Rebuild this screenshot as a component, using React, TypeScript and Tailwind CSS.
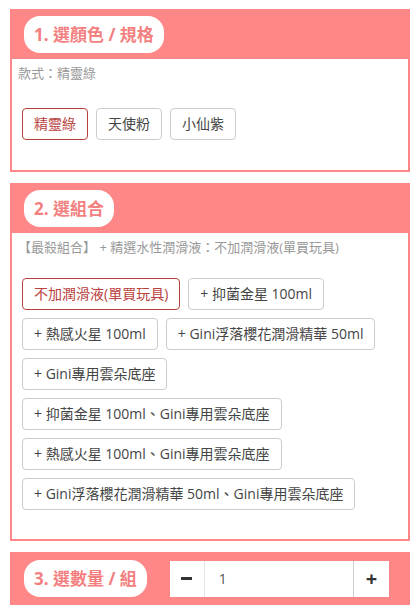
import React, { useState } from 'react';

const FONT = { fontFamily: '"Open Sans", "Noto Sans CJK TC", sans-serif' };

function Pill({ children }: { children: React.ReactNode }) {
  return (
    <div className="w-fit h-[37px] px-[10px] flex items-center rounded-[16px] bg-white text-[17px] font-bold text-[#f47f7f] leading-none whitespace-nowrap">
      {children}
    </div>
  );
}

function Option({ label, active, onClick }: { label: string; active: boolean; onClick: () => void }) {
  return (
    <button
      onClick={onClick}
      className={`h-[32px] px-[11px] rounded-[4px] border text-[14px] leading-none bg-white whitespace-nowrap ${
        active ? 'border-[#b9413d] text-[#b9413d]' : 'border-[#cccccc] text-[#444]'
      }`}
    >
      {label}
    </button>
  );
}

const colors = ['精靈綠', '天使粉', '小仙紫'];
const combos = [
  '不加潤滑液(單買玩具)',
  '+ 抑菌金星 100ml',
  '+ 熱感火星 100ml',
  '+ Gini浮落櫻花潤滑精華 50ml',
  '+ Gini專用雲朵底座',
  '+ 抑菌金星 100ml、Gini專用雲朵底座',
  '+ 熱感火星 100ml、Gini專用雲朵底座',
  '+ Gini浮落櫻花潤滑精華 50ml、Gini專用雲朵底座',
];

export default function App() {
  const [color, setColor] = useState(0);
  const [combo, setCombo] = useState(0);
  const [qty, setQty] = useState(1);

  return (
    <div className="bg-white w-[420px] min-h-[609px] pt-[9px] px-[10px] flex flex-col gap-[11px]" style={FONT}>
      {/* section 1 */}
      <div className="border-2 border-[#ff8787] w-[400px]">
        <div className="bg-[#ff8787] h-[48px] pl-[12px] pt-[5px]">
          <Pill>1. 選顏色 / 規格</Pill>
        </div>
        <div className="px-[6px] pt-[6px] pb-[30px]">
          <div className="text-[13px] text-[#999] leading-[16px]">款式：精靈綠</div>
          <div className="flex flex-wrap gap-[8px] pl-[4px] mt-[27px]">
            {colors.map((c, i) => (
              <Option key={c} label={c} active={color === i} onClick={() => setColor(i)} />
            ))}
          </div>
        </div>
      </div>

      {/* section 2 */}
      <div className="border-2 border-[#ff8787] w-[400px]">
        <div className="bg-[#ff8787] h-[48px] pl-[12px] pt-[5px]">
          <Pill>2. 選組合</Pill>
        </div>
        <div className="px-[6px] pt-[6px] pb-[29px]">
          <div className="text-[13px] text-[#999] leading-[16px]">【最殺組合】 + 精選水性潤滑液：不加潤滑液(單買玩具)</div>
          <div className="flex flex-wrap gap-[8px] pl-[4px] mt-[23px]">
            {combos.map((c, i) => (
              <Option key={c} label={c} active={combo === i} onClick={() => setCombo(i)} />
            ))}
          </div>
        </div>
      </div>

      {/* section 3 */}
      <div className="bg-[#ff8787] w-[400px] h-[53px] pl-[14px] flex items-center gap-[23px]">
        <Pill>3. 選數量 / 組</Pill>
        <div className="flex h-[36px] bg-white">
          <button
            onClick={() => setQty(Math.max(1, qty - 1))}
            className="w-[35px] h-full flex items-center justify-center border-r border-[#e5e5e5]"
          >
            <span className="block w-[11px] h-[3px] bg-[#333]" />
          </button>
          <div className="w-[148px] h-full flex items-center pl-[14px] text-[14px] text-[#555]">{qty}</div>
          <button
            onClick={() => setQty(qty + 1)}
            className="w-[36px] h-full flex items-center justify-center border-l border-[#cfcfcf] text-[20px] font-bold text-[#333]"
          >
            +
          </button>
        </div>
      </div>
    </div>
  );
}
